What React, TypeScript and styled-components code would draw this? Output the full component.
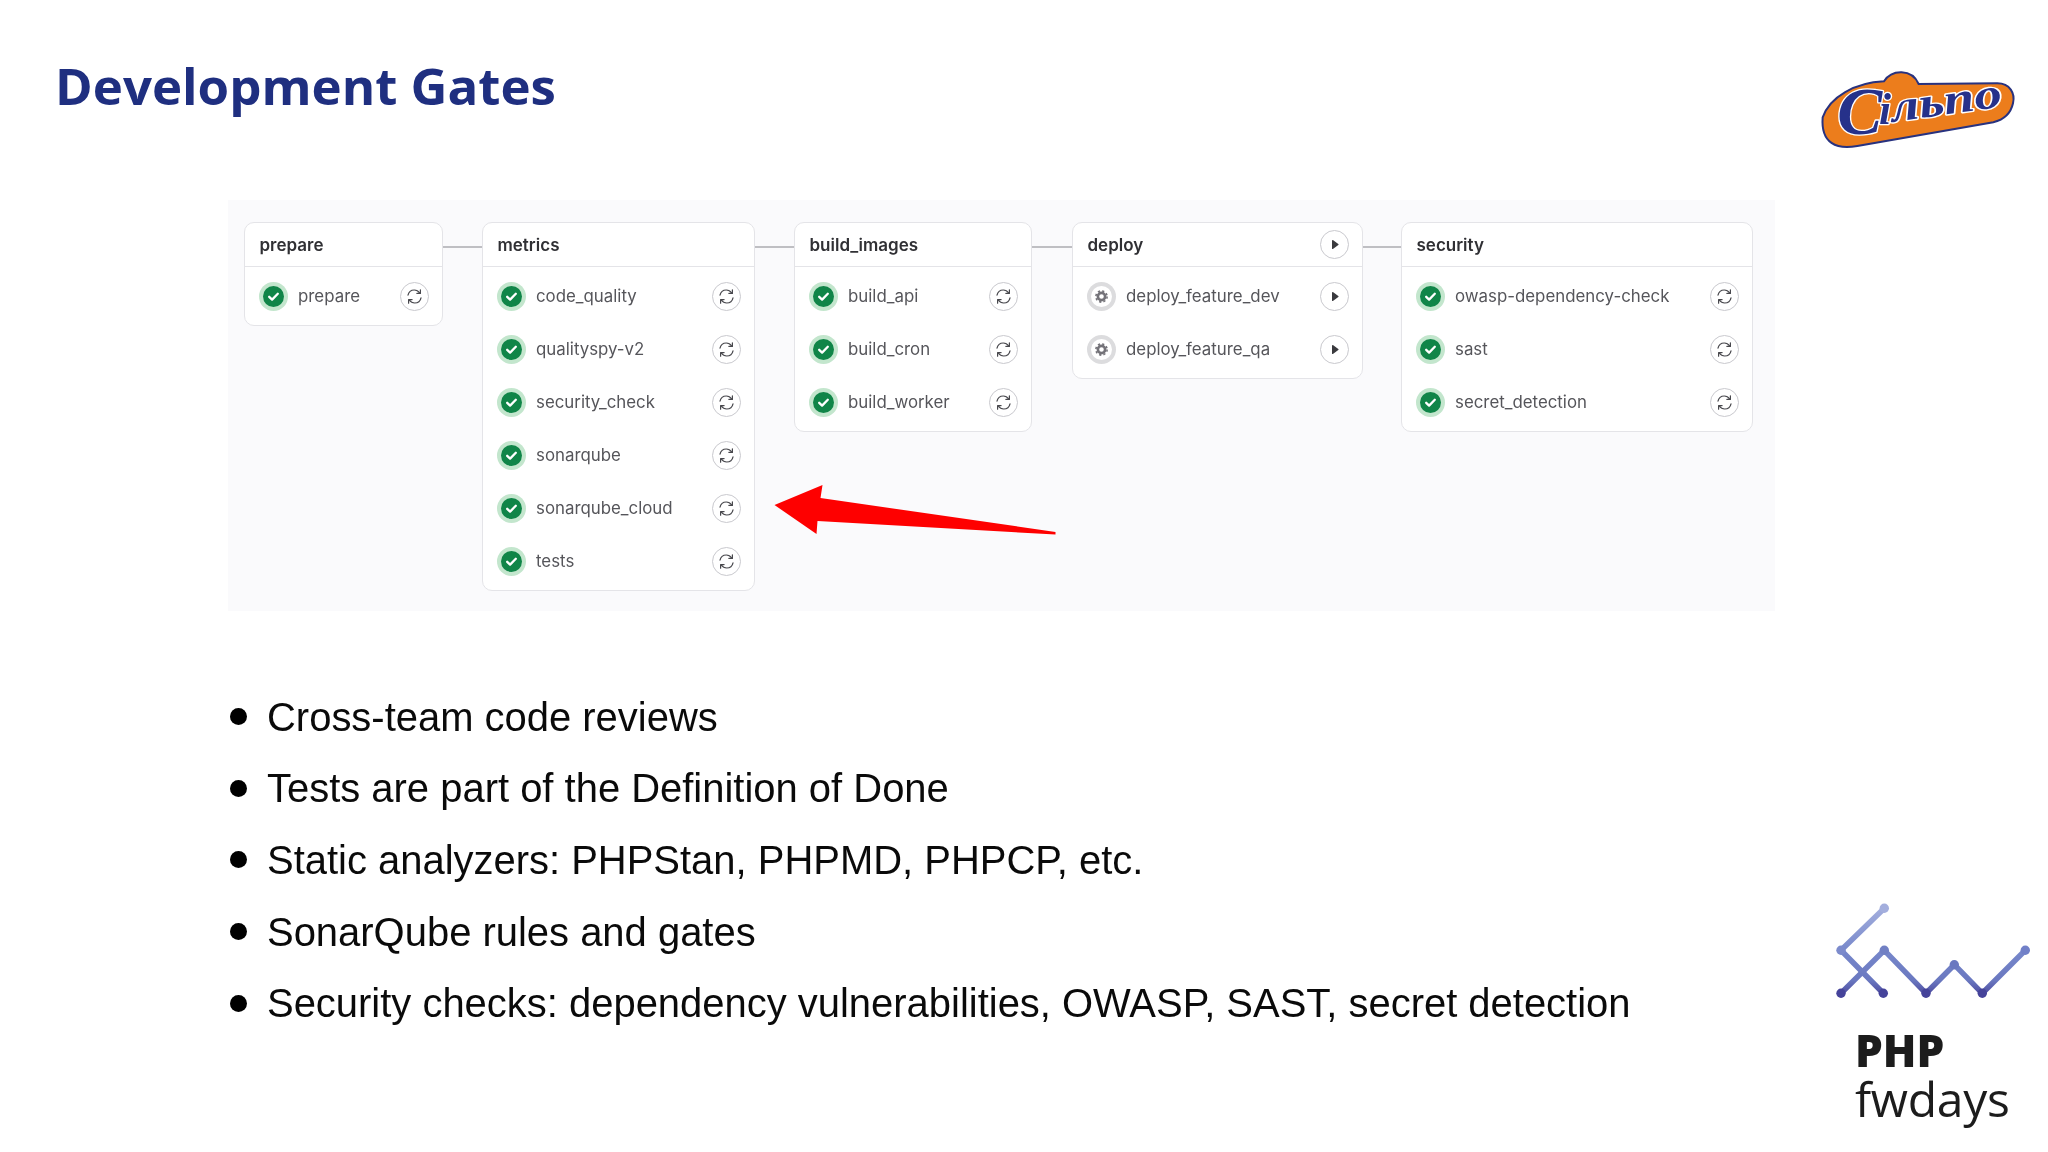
import React from "react";
import styled, { createGlobalStyle } from "styled-components";

const Global = createGlobalStyle`
  html, body { margin: 0; padding: 0; background: #fff; }
  #root { width: 2048px; height: 1152px; overflow: hidden; }
`;

const Page = styled.div`
  width: 2048px;
  height: 1152px;
  background: #fff;
  display: flex;
  flex-direction: column;
`;
const Header = styled.header`
  height: 200px;
  box-sizing: border-box;
  padding-top: 40px;
  display: flex;
  justify-content: space-between;
  align-items: flex-start;
`;
const Title = styled.h1`
  margin: 15px 0 0 55px;
  font: 700 51px/60px "Open Sans", sans-serif;
  color: #1f2f80;
  filter: blur(0.4px);
`;
const PipelinePanel = styled.section`
  position: relative;
  margin-left: 228px;
  width: 1547px;
  height: 411px;
  box-sizing: border-box;
  padding: 22px 0 0 16px;
  background: #fafafc;
  display: flex;
  align-items: flex-start;
  filter: blur(0.4px);
`;
const Stage = styled.div<{ $w: number }>`
  width: ${(p) => p.$w}px;
  box-sizing: border-box;
  background: #fff;
  border: 1.5px solid #e4e4e8;
  border-radius: 10px;
  flex: none;
`;
const StageHead = styled.div`
  height: 44px;
  box-sizing: border-box;
  border-bottom: 1.5px solid #e4e4e8;
  padding: 0 13.5px 0 14.5px;
  display: flex;
  align-items: center;
  justify-content: space-between;
  font: 600 17px/20px Inter, sans-serif;
  color: #303034;
`;
const Jobs = styled.div`
  padding: 2.5px 0;
`;
const Job = styled.div`
  height: 53px;
  padding: 0 13.5px 0 14px;
  display: flex;
  align-items: center;
  font: 400 16.85px/20px Inter, sans-serif;
  color: #55555a;
`;
const JobName = styled.span`
  flex: 1;
  margin-left: 10px;
`;
const Connector = styled.div<{ $w: number }>`
  flex: none;
  width: ${(p) => p.$w}px;
  height: 2px;
  margin-top: 24px;
  background: #bfbfc3;
`;
const ActionButton = styled.span`
  width: 29px;
  height: 29px;
  box-sizing: border-box;
  border: 1.5px solid #c9c9ce;
  border-radius: 50%;
  background: #fff;
  display: flex;
  align-items: center;
  justify-content: center;
  flex: none;
`;
const StatusIcon = styled.svg`
  width: 29px;
  height: 29px;
  flex: none;
`;
const Arrow = styled.svg`
  position: absolute;
  left: 546px;
  top: 285px;
  width: 282px;
  height: 50px;
`;
const Lower = styled.section`
  flex: 1;
  display: flex;
  justify-content: space-between;
`;
const Bullets = styled.ul`
  list-style: none;
  margin: 70px 0 0 229.5px;
  padding: 0;
  filter: blur(0.35px);
`;
const BulletItem = styled.li`
  height: 71.6px;
  display: flex;
  align-items: center;
  font: 400 39.96px/48px "Liberation Sans", Arial, sans-serif;
  color: #0a0a0a;
  white-space: nowrap;
`;
const Dot = styled.span`
  width: 17px;
  height: 17px;
  border-radius: 50%;
  background: #000;
  margin-right: 20.5px;
  flex: none;
`;
const Brand = styled.div`
  align-self: flex-end;
  width: 248px;
  height: 272px;
  display: flex;
  flex-direction: column;
  filter: blur(0.5px);
`;
const BrandMark = styled.svg`
  width: 248px;
  height: 138px;
  flex: none;
`;
const BrandName = styled.div`
  margin: 8px 0 0 55px;
  color: #1c1c1c;
  font-family: "Open Sans", "Noto Sans", sans-serif;
`;
const BrandTop = styled.div`
  font-size: 44px;
  font-weight: 800;
  line-height: 48px;
`;
const BrandBottom = styled.div`
  font-size: 48px;
  font-weight: 400;
  line-height: 50px;
  letter-spacing: -0.3px;
`;
const ShopLogo = styled.svg`
  width: 268px;
  height: 140px;
  flex: none;
  filter: blur(0.3px);
`;

const Success = () => (
  <StatusIcon viewBox="0 0 29 29">
    <circle cx="14.5" cy="14.5" r="14.5" fill="#c3e6cd" />
    <circle cx="14.5" cy="14.5" r="10.5" fill="#108548" />
    <path d="M10.200 14.800l2.900 2.800 5.700-5.800" fill="none" stroke="#fff" strokeWidth="2.300" strokeLinecap="round" strokeLinejoin="round" />
  </StatusIcon>
);

const Manual = () => (
  <StatusIcon viewBox="0 0 29 29">
    <circle cx="14.5" cy="14.5" r="14.5" fill="#dcdcde" />
    <circle cx="14.5" cy="14.5" r="10.5" fill="#fff" />
    <circle cx="14.5" cy="14.5" r="3.6" fill="none" stroke="#737278" strokeWidth="2.6" />
    <circle cx="14.5" cy="14.5" r="5.6" fill="none" stroke="#737278" strokeWidth="1.6" strokeDasharray="2.2 2.2" />
  </StatusIcon>
);

const Retry = () => (
  <svg width="17" height="17" viewBox="0 0 17 17" fill="none" stroke="#48484d" strokeWidth="1.2" strokeLinecap="round" strokeLinejoin="round">
    <path d="M2 7.2C2.6 4.2 5.2 2 8.3 2c2.2 0 4.1 1.1 5.3 2.800" />
    <path d="M14.400 1.800v3.600h-3.500" />
    <path d="M15 9.800c-.6 3-3.200 5.200-6.300 5.200-2.200 0-4.100-1.100-5.300-2.800" />
    <path d="M2.600 15.200v-3.600h3.500" />
  </svg>
);

const Play = () => (
  <svg width="13" height="13" viewBox="0 0 13 13">
    <path d="M4 2.600v7.800c0 .5.5.7.9.5l5.400-3.900c.4-.3.4-.7 0-1L4.900 2.100c-.4-.2-.9 0-.9.500z" fill="#3a3a3e" />
  </svg>
);

type JobData = { name: string; manual?: boolean };
const stages: { name: string; w: number; after?: number; play?: boolean; jobs: JobData[] }[] = [
  { name: "prepare", w: 199, after: 39, jobs: [{ name: "prepare" }] },
  {
    name: "metrics", w: 273, after: 39,
    jobs: [{ name: "code_quality" }, { name: "qualityspy-v2" }, { name: "security_check" }, { name: "sonarqube" }, { name: "sonarqube_cloud" }, { name: "tests" }],
  },
  { name: "build_images", w: 238, after: 40, jobs: [{ name: "build_api" }, { name: "build_cron" }, { name: "build_worker" }] },
  {
    name: "deploy", w: 291, after: 38, play: true,
    jobs: [{ name: "deploy_feature_dev", manual: true }, { name: "deploy_feature_qa", manual: true }],
  },
  { name: "security", w: 352, jobs: [{ name: "owasp-dependency-check" }, { name: "sast" }, { name: "secret_detection" }] },
];

const bullets = [
  "Cross-team code reviews",
  "Tests are part of the Definition of Done",
  "Static analyzers: PHPStan, PHPMD, PHPCP, etc.",
  "SonarQube rules and gates",
  "Security checks: dependency vulnerabilities, OWASP, SAST, secret detection",
];

export default function App() {
  return (
    <Page>
      <Global />
      <Header>
        <Title>Development Gates</Title>
        <ShopLogo viewBox="0 0 804 420">
          <path
            d="M128 232C150 170 225 128 312 124C335 88 395 85 416 132L652 130C690 130 706 160 699 190C692 222 668 240 640 247L232 318C170 330 122 310 128 232Z"
            fill="#ec7d1c"
            stroke="#28327f"
            strokeWidth="6"
          />
          <g fontFamily='"Liberation Serif", serif' fontStyle="italic" fontWeight="700" fill="#26318a" stroke="#fff" strokeWidth="8" paintOrder="stroke" strokeLinejoin="round">
            <text x="172" y="282" fontSize="205" textLength="135" lengthAdjust="spacingAndGlyphs">С</text>
            <text x="297" y="252" fontSize="130">і</text>
            <text x="338" y="246" fontSize="128" transform="rotate(-8 338 246)" textLength="335" lengthAdjust="spacingAndGlyphs">льпо</text>
          </g>
        </ShopLogo>
      </Header>
      <PipelinePanel>
        {stages.map((s) => (
          <React.Fragment key={s.name}>
            <Stage $w={s.w}>
              <StageHead>
                {s.name}
                {s.play && (
                  <ActionButton>
                    <Play />
                  </ActionButton>
                )}
              </StageHead>
              <Jobs>
                {s.jobs.map((j) => (
                  <Job key={j.name}>
                    {j.manual ? <Manual /> : <Success />}
                    <JobName>{j.name}</JobName>
                    <ActionButton>{j.manual ? <Play /> : <Retry />}</ActionButton>
                  </Job>
                ))}
              </Jobs>
            </Stage>
            {s.after && <Connector $w={s.after} />}
          </React.Fragment>
        ))}
        <Arrow viewBox="0 0 281 50">
          <path d="M0 20L48 0L46 13L281 47L281 49.500L43 36L42 49Z" fill="#fe0000" />
        </Arrow>
      </PipelinePanel>
      <Lower>
        <Bullets>
          {bullets.map((b) => (
            <BulletItem key={b}>
              <Dot />
              {b}
            </BulletItem>
          ))}
        </Bullets>
        <Brand>
          <BrandMark viewBox="0 0 248 138">
            <defs>
              <linearGradient id="fw" x1="0" y1="28" x2="0" y2="113" gradientUnits="userSpaceOnUse">
                <stop offset="0" stopColor="#a3aedd" />
                <stop offset="0.5" stopColor="#7788cb" />
                <stop offset="0.85" stopColor="#6a78c0" />
                <stop offset="1" stopColor="#4f4fa2" />
              </linearGradient>
            </defs>
            <path d="M84.300 28.300L41 70.300L83.300 113.300" fill="none" stroke="url(#fw)" strokeWidth="5.500" strokeLinejoin="round" />
            <path d="M41 113.300L84.300 70.300L126 113.300L154.300 84.700L182.300 113.300L225.300 70.300" fill="none" stroke="url(#fw)" strokeWidth="5.500" strokeLinejoin="round" />
            <circle cx="84.300" cy="28.300" r="4.700" fill="#a3aedd" />
            <circle cx="41" cy="70.300" r="4.700" fill="#7c8bcc" />
            <circle cx="84.300" cy="70.300" r="4.700" fill="#7180c4" />
            <circle cx="225.300" cy="70.300" r="4.700" fill="#7180c8" />
            <circle cx="154.300" cy="84.700" r="4.700" fill="#6a78c0" />
            <circle cx="41" cy="113.300" r="4.700" fill="#45439a" />
            <circle cx="83.300" cy="113.300" r="4.700" fill="#45439a" />
            <circle cx="126" cy="113.300" r="4.700" fill="#45439a" />
            <circle cx="182.300" cy="113.300" r="4.700" fill="#45439a" />
          </BrandMark>
          <BrandName>
            <BrandTop>PHP</BrandTop>
            <BrandBottom>fwdays</BrandBottom>
          </BrandName>
        </Brand>
      </Lower>
    </Page>
  );
}
